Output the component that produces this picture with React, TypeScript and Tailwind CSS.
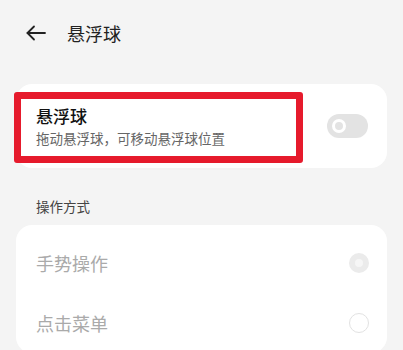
import React from "react";

export default function App() {
  return (
    <div
      className="h-[350px] w-[403px] overflow-hidden bg-[#f4f4f4]"
      style={{ fontFamily: '"Noto Sans CJK SC", "Noto Sans", sans-serif' }}
    >
      <div className="flex h-[66px] items-center pl-[26px]">
        <svg width="20" height="16" viewBox="0 0 20 16" fill="none" stroke="#222" strokeWidth="1.8" strokeLinecap="round" strokeLinejoin="round">
          <path d="M19 8H1.5" />
          <path d="M8 1.5L1.5 8L8 14.5" />
        </svg>
        <span className="ml-[21px] text-[18px] leading-[24px] text-[#222]">悬浮球</span>
      </div>

      <div className="relative mx-4 mt-[18px] flex h-[84px] items-center justify-between rounded-[16px] bg-white pl-5 pr-[19px]">
        <div className="flex flex-col">
          <span className="text-[17px] font-medium leading-[22px] text-[#111]">悬浮球</span>
          <span className="mt-[1px] text-[13.5px] leading-[20px] text-[#666]">拖动悬浮球，可移动悬浮球位置</span>
        </div>
        <div className="flex h-[24px] w-[41px] items-center rounded-full bg-[#e3e3e3] pl-[5px]">
          <div className="h-[14px] w-[14px] rounded-full border-[3px] border-white" />
        </div>
        <div className="pointer-events-none absolute left-[-2px] top-[8px] h-[71px] w-[289px] rounded-[3px] border-[7px] border-[#e61a2c]" />
      </div>

      <div className="mt-[30px] pl-9 text-[13.5px] leading-[16px] text-[#444]">操作方式</div>

      <div className="mx-4 mt-[11px] rounded-[16px] bg-white pt-2">
        <div className="flex h-[60px] items-center justify-between pl-5 pr-[18px]">
          <span className="text-[18px] text-[#aaa]">手势操作</span>
          <div className="flex h-[20px] w-[20px] items-center justify-center rounded-full bg-[#ebebeb]">
            <div className="h-[8px] w-[8px] rounded-full bg-[#f6f6f6]" />
          </div>
        </div>
        <div className="flex h-[60px] items-center justify-between pl-5 pr-[18px]">
          <span className="text-[18px] text-[#aaa]">点击菜单</span>
          <div className="h-[20px] w-[20px] rounded-full border border-[#e2e2e2]" />
        </div>
      </div>
    </div>
  );
}
